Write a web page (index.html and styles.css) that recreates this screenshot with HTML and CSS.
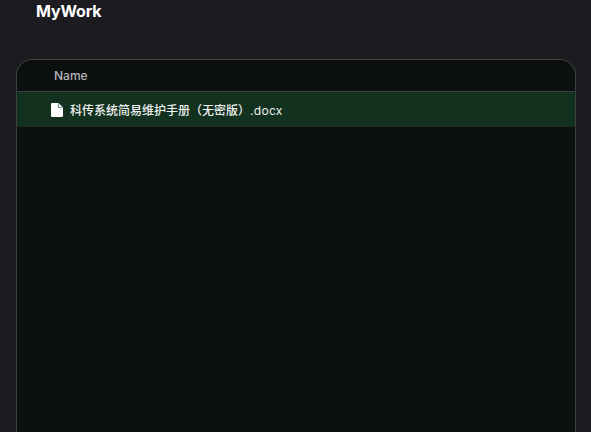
FILE: index.html
```html
<!DOCTYPE html>
<html lang="zh">
<head>
<meta charset="utf-8">
<title>MyWork</title>
<link rel="stylesheet" href="styles.css">
</head>
<body>
<h1 class="title">MyWork</h1>
<section class="table">
  <div class="head"><span>Name</span></div>
  <div class="row">
    <svg class="icon" viewBox="0 0 12 14" width="12" height="14"><path fill="#fff" d="M1.2 0H7.5L12 4.5V12.8A1.2 1.2 0 0 1 10.8 14H1.2A1.2 1.2 0 0 1 0 12.8V1.2A1.2 1.2 0 0 1 1.2 0Z"/><path fill="#12321f" d="M7.2 .6V4.8H11.4V4.2H7.8V.6Z"/></svg>
    <span class="file">科传系统简易维护手册（无密版）<span class="ext">.docx</span></span>
  </div>
</section>
</body>
</html>
```
FILE: styles.css
```css
html, body { height: 100%; }
body {
  margin: 0;
  background: #1b1b20;
  overflow: hidden;
  font-family: "Inter", "Noto Sans CJK SC", sans-serif;
  display: flex;
  flex-direction: column;
}
.title {
  margin: 0;
  padding: 2px 0 0 36px;
  height: 59px;
  box-sizing: border-box;
  font-size: 16px;
  line-height: 19px;
  font-weight: 700;
  letter-spacing: -0.15px;
  color: #fff;
}
.table {
  flex: 1;
  margin: 0 15px 0 16px;
  background: #0c1110;
  border: 1px solid #3f3f44;
  border-bottom: 0;
  border-radius: 16px 16px 0 0;
  overflow: hidden;
}
.head {
  height: 31px;
  display: flex;
  align-items: center;
  padding-left: 37px;
  font-size: 12px;
  font-weight: 500;
  color: #b4b4b8;
  border-bottom: 1px solid #3f3f44;
}
.row {
  height: 34px;
  display: flex;
  align-items: center;
  gap: 7px;
  padding-left: 34px;
  background: #12321f;
  border-bottom: 1px solid #1a2a20;
}
.icon {
  margin-top: 1px;
}
.file {
  font-size: 12px;
  font-weight: 500;
  color: #f0f0f0;
}
.ext {
  font-weight: 400;
  letter-spacing: 0.3px;
}
```
